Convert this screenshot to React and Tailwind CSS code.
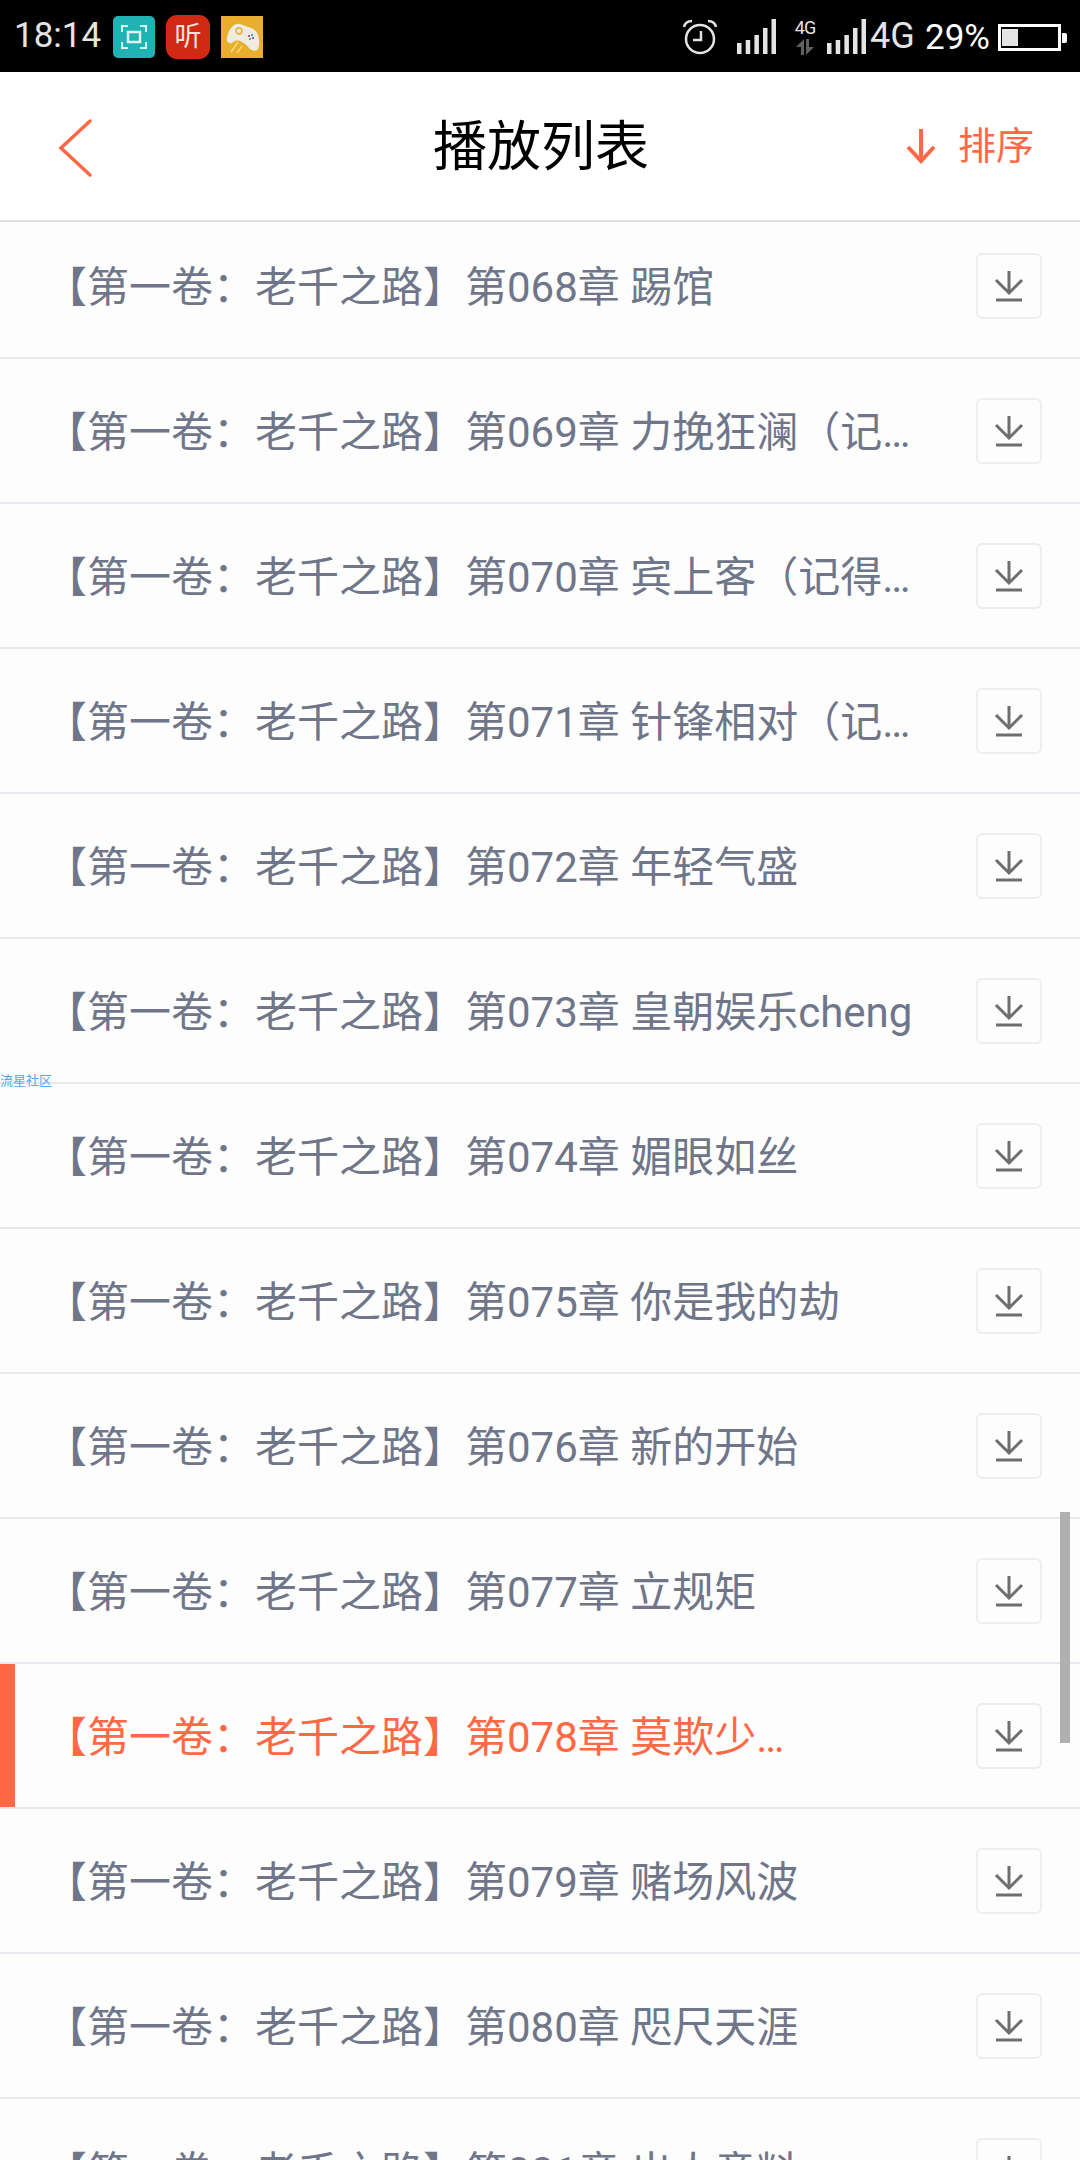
import React from 'react'

const font = { fontFamily: 'Roboto, "Noto Sans CJK SC", sans-serif' }

const chapters = [
  '第068章 踢馆',
  '第069章 力挽狂澜（记…',
  '第070章 宾上客（记得…',
  '第071章 针锋相对（记…',
  '第072章 年轻气盛',
  '第073章 皇朝娱乐cheng',
  '第074章 媚眼如丝',
  '第075章 你是我的劫',
  '第076章 新的开始',
  '第077章 立规矩',
  '第078章 莫欺少…',
  '第079章 赌场风波',
  '第080章 咫尺天涯',
  '第081章 出人意料',
]

function Signal() {
  return (
    <svg width="39" height="35" viewBox="0 0 39 35" fill="#e4e4e4">
      <rect x="0" y="24" width="4.500" height="11" />
      <rect x="8.700" y="21" width="4.500" height="14" />
      <rect x="17.400" y="16" width="4.500" height="19" />
      <rect x="26" y="9" width="4.500" height="26" />
      <rect x="34.500" y="0" width="4.500" height="35" />
    </svg>
  )
}

function StatusBar() {
  return (
    <div className="h-[72px] bg-black flex items-center pl-[14px] pr-[13px] text-[#e4e4e4]" style={font}>
      <span className="text-[35px] w-[99px] leading-[44px]">18:14</span>
      <div className="w-[42px] h-[42px] mt-[2px] rounded-[5px] bg-[#1fb3b3] flex items-center justify-center">
        <svg width="26" height="24" viewBox="0 0 26 24" fill="none" stroke="#e4f2f2" strokeWidth="2">
          <path d="M7 1H1V7M19 1H25V7M7 23H1V17M19 23H25V17" />
          <rect x="7" y="7" width="12" height="10" strokeWidth="2.500" />
        </svg>
      </div>
      <div className="ml-[11px] w-[44px] h-[44px] mt-[2px] rounded-[11px] bg-[#d12a14] flex items-center justify-center text-[#f2e2dc] text-[27px] leading-[44px]">听</div>
      <div className="ml-[11px] w-[42px] h-[42px] mt-[2px] bg-[#e8ae2c]">
        <svg width="42" height="42" viewBox="0 0 42 42">
          <path d="M10 36L17 26M16 37L21 30" stroke="#f6dd7a" strokeWidth="1.500" />
          <path d="M6 22C8 12 13 7 19 8C23 9 26 11 30 12C36 14 39 21 38 30C37 36 32 36 28 32C26 29 23 27 19 25C15 24 13 25 11 27C7 28 5 25 6 22Z" fill="#f0ebe0" />
          <circle cx="18" cy="15" r="3" fill="none" stroke="#e8a82c" strokeWidth="1.300" />
          <rect x="27" y="19" width="2" height="2" fill="#e2506a" />
          <rect x="30" y="18" width="2" height="2" fill="#35b6d8" />
          <rect x="31" y="21" width="2" height="2" fill="#7a5be0" />
          <rect x="28" y="22" width="2" height="2" fill="#6cb83c" />
        </svg>
      </div>
      <div className="ml-auto flex items-center">
        <svg className="mt-[2px]" width="36" height="36" viewBox="0 0 36 36" fill="none" stroke="#e4e4e4">
          <circle cx="18" cy="20" r="14" strokeWidth="2.500" />
          <path d="M19 12V21H11" strokeWidth="2.500" />
          <path d="M2 8C3 4 6 2 10 2M34 8C33 4 30 2 26 2" strokeWidth="2.500" />
        </svg>
        <div className="ml-[19px]"><Signal /></div>
        <div className="ml-[17px] w-[24px] flex flex-col items-center">
          <span className="text-[18px] leading-[20px] tracking-[-1px] text-[#e4e4e4]">4G</span>
          <svg className="mt-[1px]" width="18" height="16" viewBox="0 0 18 18" fill="#5f5f5f" preserveAspectRatio="none">
            <path d="M8 0V18H5V9H0ZM10 18V0H13V9H18Z" />
          </svg>
        </div>
        <div className="ml-[10px]"><Signal /></div>
        <span className="ml-[4px] w-[44px] text-[36px] leading-[44px]">4G</span>
        <span className="ml-[11px] w-[65px] text-[35px] leading-[44px] mt-[3px] text-white">29%</span>
        <div className="ml-[8px] mt-[3px] w-[63px] h-[27px] border-[3px] border-white flex items-center pl-[1px]">
          <div className="w-[16px] h-[17px] bg-[#e4e4e4]"></div>
        </div>
        <div className="ml-[1px] mt-[3px] w-[5px] h-[10px] bg-white rounded-r-[2px]"></div>
      </div>
    </div>
  )
}

function Header() {
  return (
    <div className="relative h-[150px] bg-white border-b-2 border-[#e2e2e2] flex items-center" style={font}>
      <svg className="ml-[58px] mt-[4px]" width="36" height="60" viewBox="0 0 36 60" fill="none" stroke="#ff6844" strokeWidth="3.500" strokeLinecap="round">
        <path d="M32 3L3 30L32 57" />
      </svg>
      <h1 className="absolute left-[433px] top-[38px] text-[54px] leading-[76px] text-black font-normal">播放列表</h1>
      <div className="ml-auto mr-[46px] flex items-center text-[#ff6844] text-[38px] leading-[50px]">
        <svg width="32" height="38" viewBox="0 0 32 38" fill="none" stroke="#ff6844" strokeWidth="4">
          <path d="M16 2V34M3 20L16 34L29 20" />
        </svg>
        <span className="ml-[21px]">排序</span>
      </div>
    </div>
  )
}

function DownloadButton() {
  return (
    <button className="w-[66px] h-[66px] rounded-[6px] border-2 border-[#eeeeee] flex items-center justify-center">
      <svg width="30" height="32" viewBox="0 0 30 32" fill="none" stroke="#6e6e6e" strokeWidth="3">
        <path d="M15 1V23M2 10L15 23L28 10" />
        <path d="M2 30H28" />
      </svg>
    </button>
  )
}

function Row({ title, active }) {
  return (
    <div className="relative h-[145px] shrink-0 border-b-2 border-[#e6e9ee] flex items-center pl-[45px] pr-[38px]">
      {active && <div className="absolute left-0 top-0 bottom-0 w-[15px] bg-[#ff6844]"></div>}
      <div className={active ? 'mt-[4px] whitespace-nowrap text-[42px] leading-[60px] text-[#ff6844]' : 'mt-[4px] whitespace-nowrap text-[42px] leading-[60px] text-[#70768a]'}>
        {'【第一卷：老千之路】' + title}
      </div>
      <div className="ml-auto"><DownloadButton /></div>
    </div>
  )
}

export default function App() {
  return (
    <div className="relative w-[1080px] h-[2160px] overflow-hidden bg-[#fdfdfd]" style={font}>
      <StatusBar />
      <Header />
      <div className="-mt-[8px] flex flex-col">
        {chapters.map((title, i) => (
          <Row key={title} title={title} active={i === 10} />
        ))}
      </div>
      <div className="absolute left-0 top-[1073px] text-[13px] leading-[16px] text-[#4aa8f0]">流星社区</div>
      <div className="absolute left-[1060px] top-[1512px] w-[10px] h-[231px] bg-[#b0b0b0]"></div>
    </div>
  )
}
